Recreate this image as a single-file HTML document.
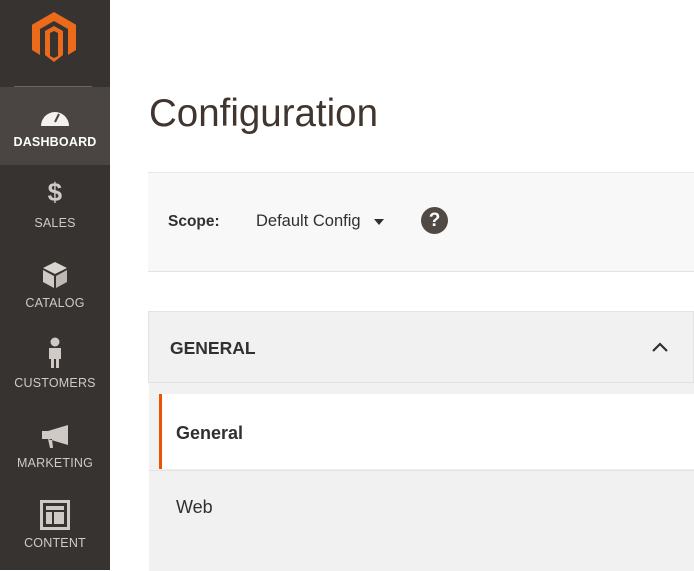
<!DOCTYPE html>
<html><head><style>
body{margin:0;width:694px;height:570px;overflow:hidden;background:#fff;font-family:"Liberation Sans",sans-serif;position:relative}
.sb{position:absolute;left:0;top:0;width:110px;height:570px;background:#373330}
.sep{position:absolute;left:14px;top:86px;width:78px;height:1px;background:#6b6561}
.item{position:absolute;left:0;width:110px;height:80px;text-align:center;color:#cfcac6;font-size:12.5px;letter-spacing:.2px}
.item .lbl{position:absolute;left:0;right:0;top:50px}
.item svg{position:absolute;left:50%;transform:translateX(-50%)}
.a{position:absolute}
</style></head><body>
<div class="sb">
<svg class="a" style="left:30px;top:12px" width="48" height="52" viewBox="0 0 48 52"><path d="M24 0 L46 12.7 V38 L38 43 V17 L24 9 L10 17 V43 L2 38 V12.7Z" fill="#eb6a1c"/><path d="M15 19 L24 14 L33 19 V43 L24 50 L15 43Z" fill="#eb6a1c"/><path d="M20 21 L24 19 L28 21 V44 L24 46 L20 44Z" fill="#373330"/></svg>
<div class="sep"></div>
<div class="item" style="top:87px;height:78px;background:#4a4542;color:#fff">
<svg style="top:20px" width="30" height="20" viewBox="0 0 30 20"><path d="M1 19 A14 14 0 0 1 29 19Z" fill="#f4f1ee"/><path d="M15 15 L19 7" stroke="#4a4542" stroke-width="2"/></svg>
<div class="lbl" style="top:48px;font-weight:bold">DASHBOARD</div></div>
<div class="item" style="top:165px">
<div style="position:absolute;left:0;right:0;top:12px;font-size:26px;font-weight:bold;color:#cfcac6">$</div>
<div class="lbl" style="top:51px">SALES</div></div>
<div class="item" style="top:245px">
<svg style="top:16px" width="26" height="28" viewBox="0 0 26 28"><path d="M13 1 L25 7 L13 13 L1 7Z" fill="#d8d4d0"/><path d="M1 9 L12 15 V27 L1 21Z" fill="#cfcac6"/><path d="M25 9 L14 15 V27 L25 21Z" fill="#bdb8b4"/></svg>
<div class="lbl" style="top:51px">CATALOG</div></div>
<div class="item" style="top:325px">
<svg style="top:12px" width="16" height="32" viewBox="0 0 16 32"><circle cx="8" cy="5" r="4.5" fill="#cfcac6"/><path d="M2 11 H14 V22 H12 V31 H9 V22 H7 V31 H4 V22 H2Z" fill="#cfcac6"/></svg>
<div class="lbl" style="top:51px">CUSTOMERS</div></div>
<div class="item" style="top:405px">
<svg style="top:20px" width="30" height="24" viewBox="0 0 30 24"><path d="M8 6 L28 0 V20 L8 14Z M2 6 H8 V14 H2Z M8 14 L10 23 H13 L12 14Z" fill="#cfcac6"/></svg>
<div class="lbl" style="top:51px">MARKETING</div></div>
<div class="item" style="top:485px">
<svg style="top:15px" width="30" height="30" viewBox="0 0 30 30"><rect x="1.5" y="1.5" width="27" height="27" fill="none" stroke="#cfcac6" stroke-width="3"/><rect x="6" y="6" width="18" height="4" fill="#cfcac6"/><rect x="6" y="12" width="6" height="12" fill="#cfcac6"/><rect x="14" y="12" width="10" height="12" fill="#cfcac6"/></svg>
<div class="lbl" style="top:51px">CONTENT</div></div>
</div>
<div class="a" style="left:149px;top:92px;font-size:38.5px;color:#41362f">Configuration</div>
<div class="a" style="left:148px;top:172px;width:546px;height:98px;background:#f8f8f8;border-top:1px solid #e8e8e8;border-bottom:1px solid #e3e3e3"></div>
<div class="a" style="left:168px;top:213px;font-size:15.5px;font-weight:bold;color:#303030">Scope:</div>
<div class="a" style="left:256px;top:212px;font-size:16.5px;color:#303030">Default Config</div>
<svg class="a" style="left:374px;top:219px" width="10" height="6"><path d="M0 0H10L5 6Z" fill="#303030"/></svg>
<div class="a" style="left:421px;top:207px;width:27px;height:27px;border-radius:50%;background:#514943;color:#fff;font-weight:bold;font-size:19px;text-align:center;line-height:27px">?</div>
<div class="a" style="left:148px;top:311px;width:544px;height:70px;background:#f1f1f1;border:1px solid #e3e3e3"></div>
<div class="a" style="left:170px;top:338px;font-size:17.5px;font-weight:bold;color:#303030">GENERAL</div>
<svg class="a" style="left:652px;top:342px" width="16" height="10"><path d="M1 9L8 2L15 9" stroke="#303030" stroke-width="2.2" fill="none"/></svg>
<div class="a" style="left:149px;top:382px;width:545px;height:12px;background:#f1f1f1;border-top:1px solid #e3e3e3"></div>
<div class="a" style="left:149px;top:394px;width:545px;height:76px;background:#f1f1f1"></div>
<div class="a" style="left:159px;top:394px;width:535px;height:75px;background:#fff;border-left:3px solid #eb5202;box-sizing:border-box"></div>
<div class="a" style="left:176px;top:423px;font-size:18px;font-weight:bold;color:#303030">General</div>
<div class="a" style="left:149px;top:470px;width:545px;height:100px;background:#f1f1f1;border-top:1px solid #e3e3e3"></div>
<div class="a" style="left:176px;top:497px;font-size:18px;color:#303030">Web</div>
</body></html>
